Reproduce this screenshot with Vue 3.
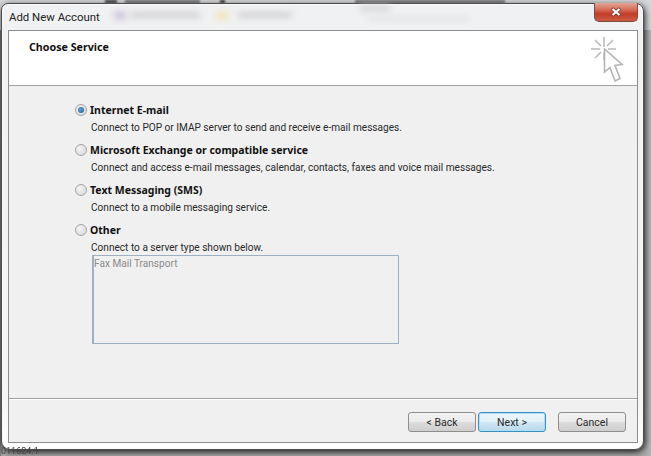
<script setup>
const options = [
  { title: 'Internet E-mail', desc: 'Connect to POP or IMAP server to send and receive e-mail messages.', on: true },
  { title: 'Microsoft Exchange or compatible service', desc: 'Connect and access e-mail messages, calendar, contacts, faxes and voice mail messages.' },
  { title: 'Text Messaging (SMS)', desc: 'Connect to a mobile messaging service.' },
  { title: 'Other', desc: 'Connect to a server type shown below.' },
]
</script>

<template>
  <div class="desk">
    <div class="bg-top">
      <span class="frag f1"></span><span class="frag f2"></span><span class="frag f3"></span><span class="frag f4"></span>
    </div>
    <span class="tail">011624.1</span>
    <div class="window">
      <div class="titlebar">
        <span class="title">Add New Account</span>
        <span class="ghost g1"></span><span class="ghost g2"></span><span class="ghost g3"></span>
        <span class="ghost g4"></span><span class="ghost g5"></span><span class="ghost g6"></span>
        <div class="close">
          <svg width="16" height="10" viewBox="0 0 16 10">
            <path d="M4 1.500 L12 8.500 M12 1.500 L4 8.500" stroke="#6a3a33" stroke-width="3.600" fill="none" />
            <path d="M4.500 2 L11.500 8 M11.500 2 L4.500 8" stroke="#fff" stroke-width="2.200" fill="none" />
          </svg>
        </div>
      </div>
      <div class="client">
        <div class="header">
          <h1>Choose Service</h1>
          <svg class="wizard" width="34" height="50" viewBox="0 0 34 50" fill="none">
            <g stroke="#b9b9b9" stroke-width="1.500">
              <path d="M14 2 V12 M14 17 V25 M1 14 H10 M18 14 H26 M5 5 L11 11 M23 5 L17 11 M5 23 L11 17" />
            </g>
            <path d="M14.500 14 L14.500 37 L20 32.500 L25 46 L30 43.500 L25 30.500 L32 29.500 Z" fill="#fff" stroke="#b4b4b4" stroke-width="1.600" />
          </svg>
        </div>
        <div class="body">
          <div v-for="o in options" :key="o.title" class="option">
            <div class="row">
              <span class="radio" :class="{ on: o.on }"></span>
              <span class="label">{{ o.title }}</span>
            </div>
            <div class="desc">{{ o.desc }}</div>
          </div>
          <div class="listbox">Fax Mail Transport</div>
        </div>
        <div class="footer">
          <button class="btn">&lt; Back</button>
          <button class="btn primary">Next &gt;</button>
          <button class="btn cancel">Cancel</button>
        </div>
      </div>
    </div>
  </div>
</template>

<style scoped>
.desk {
  position: relative;
  width: 651px;
  height: 456px;
  overflow: hidden;
  background: linear-gradient(90deg, #6f6f6f 0, #a8a8a8 2px, #a8a8a8 645px, #b5b5b5 100%);
  font-family: Roboto, "Noto Sans", sans-serif;
  color: #1c1c1c;
}
.bg-top {
  position: absolute;
  inset: 0 0 auto 0;
  height: 30px;
  background: #d5d6d7;
}
.frag {
  position: absolute;
  top: 0;
  height: 3px;
  background: #6f6f72;
  filter: blur(1px);
}
.f1 { left: 105px; width: 12px; background: #3c3c44; }
.f2 { left: 125px; width: 75px; }
.f3 { left: 220px; width: 5px; background: #333; }
.f4 { left: 355px; width: 150px; }
.tail {
  position: absolute;
  left: 1px;
  top: 447px;
  font-size: 9px;
  line-height: 9px;
  color: #444;
  filter: blur(0.4px);
  z-index: 1;
}
.window {
  position: absolute;
  left: 1px;
  top: 3px;
  width: 643px;
  height: 447px;
  box-sizing: border-box;
  display: flex;
  flex-direction: column;
  padding: 0 5px 6px 6px;
  background: linear-gradient(#f0f1f2, #f6f6f7 90%, #fff);
  border: 1px solid #4c4c4c;
  border-radius: 7px 8px 9px 9px;
  box-shadow: inset 0 0 0 1px #fafafa, 1px 2px 6px rgba(0, 0, 0, 0.85);
}
.titlebar {
  height: 26px;
  flex: none;
  position: relative;
}
.title {
  position: absolute;
  left: 1px;
  top: 5px;
  font-size: 11.400px;
  line-height: 16px;
  color: #222;
  z-index: 1;
}
.ghost {
  position: absolute;
  height: 6px;
  background: #d2d2d6;
  filter: blur(3px);
}
.g1 { left: 106px; top: 7px; width: 12px; height: 9px; background: #d0c8de; }
.g2 { left: 122px; top: 8px; width: 70px; }
.g3 { left: 208px; top: 7px; width: 12px; height: 9px; background: #efe6bd; }
.g4 { left: 230px; top: 8px; width: 54px; }
.g5 { left: 352px; top: 2px; width: 30px; height: 5px; }
.g6 { left: 360px; top: 13px; width: 100px; height: 4px; background: #e0e0e2; }
.close {
  position: absolute;
  right: 0;
  top: -1px;
  width: 44px;
  height: 19px;
  box-sizing: border-box;
  display: flex;
  align-items: center;
  justify-content: center;
  background: linear-gradient(#e0a596 0%, #d8705c 35%, #c43c2a 60%, #cd5a44 100%);
  border: 1px solid #7e4a40;
  border-top: none;
  border-radius: 0 0 5px 5px;
}
.client {
  flex: 1;
  display: flex;
  flex-direction: column;
  background: #f0f0f0;
  border: 1px solid #8c8c8c;
  min-height: 0;
}
.header {
  height: 54px;
  flex: none;
  position: relative;
  background: #fff;
  border-bottom: 1px solid #a0a0a0;
}
h1 {
  margin: 0;
  position: absolute;
  left: 20px;
  top: 9px;
  font-family: "Noto Sans", sans-serif;
  font-size: 10.700px;
  line-height: 15px;
  font-weight: 700;
  color: #111;
}
.wizard {
  position: absolute;
  right: 13px;
  top: 4px;
}
.body {
  flex: 1;
  padding: 16px 0 0 66px;
  min-height: 0;
}
.option {
  height: 40px;
}
.row {
  display: flex;
  align-items: center;
  height: 16px;
  gap: 3px;
}
.radio {
  width: 12px;
  height: 12px;
  box-sizing: border-box;
  border-radius: 50%;
  border: 1px solid #a2a5a8;
  background: radial-gradient(circle at 35% 35%, #f5f5f5, #d4d4d4);
  position: relative;
  flex: none;
}
.radio.on::after {
  content: "";
  position: absolute;
  inset: 2px;
  border-radius: 50%;
  background: radial-gradient(circle at 40% 40%, #5fa0d0, #1f5c8c);
}
.label {
  font-family: "Noto Sans", sans-serif;
  font-size: 10.500px;
  line-height: 16px;
  font-weight: 700;
  color: #111;
}
.desc {
  margin: 2px 0 0 16px;
  font-size: 10.100px;
  line-height: 15px;
  color: #2a2a2a;
  white-space: nowrap;
}
.listbox {
  margin: -7px 0 0 17px;
  width: 307px;
  height: 89px;
  box-sizing: border-box;
  padding: 1px 0 0;
  border: 1px solid #9fb0c2;
  border-left-width: 2px;
  background: #f0f0f0;
  font-size: 10.100px;
  line-height: 14px;
  color: #8a8a8a;
}
.footer {
  flex: none;
  height: 44px;
  box-sizing: border-box;
  border-top: 1px solid #a0a0a0;
  box-shadow: inset 0 1px 0 #fff;
  display: flex;
  align-items: flex-start;
  padding: 13px 0 0 399px;
  gap: 2px;
}
.btn {
  width: 68px;
  height: 20px;
  padding: 1px 0 0;
  font: inherit;
  font-size: 10.500px;
  line-height: 17px;
  color: #2a2a2a;
  border: 1px solid #8e8e8e;
  border-radius: 3px;
  background: linear-gradient(#f2f2f2 0%, #ebebeb 48%, #dcdcdc 52%, #cfcfcf 100%);
}
.primary {
  border: 1px solid #3c8fc4;
  box-shadow: inset 0 0 0 1px #a8e0f5;
  background: linear-gradient(#ecf6fb 0%, #e2f1f9 48%, #cfe6f3 52%, #bcd9eb 100%);
}
.cancel {
  margin-left: 10px;
}
</style>

<style>
html, body { margin: 0; padding: 0; background: #a8a8a8; }
</style>
